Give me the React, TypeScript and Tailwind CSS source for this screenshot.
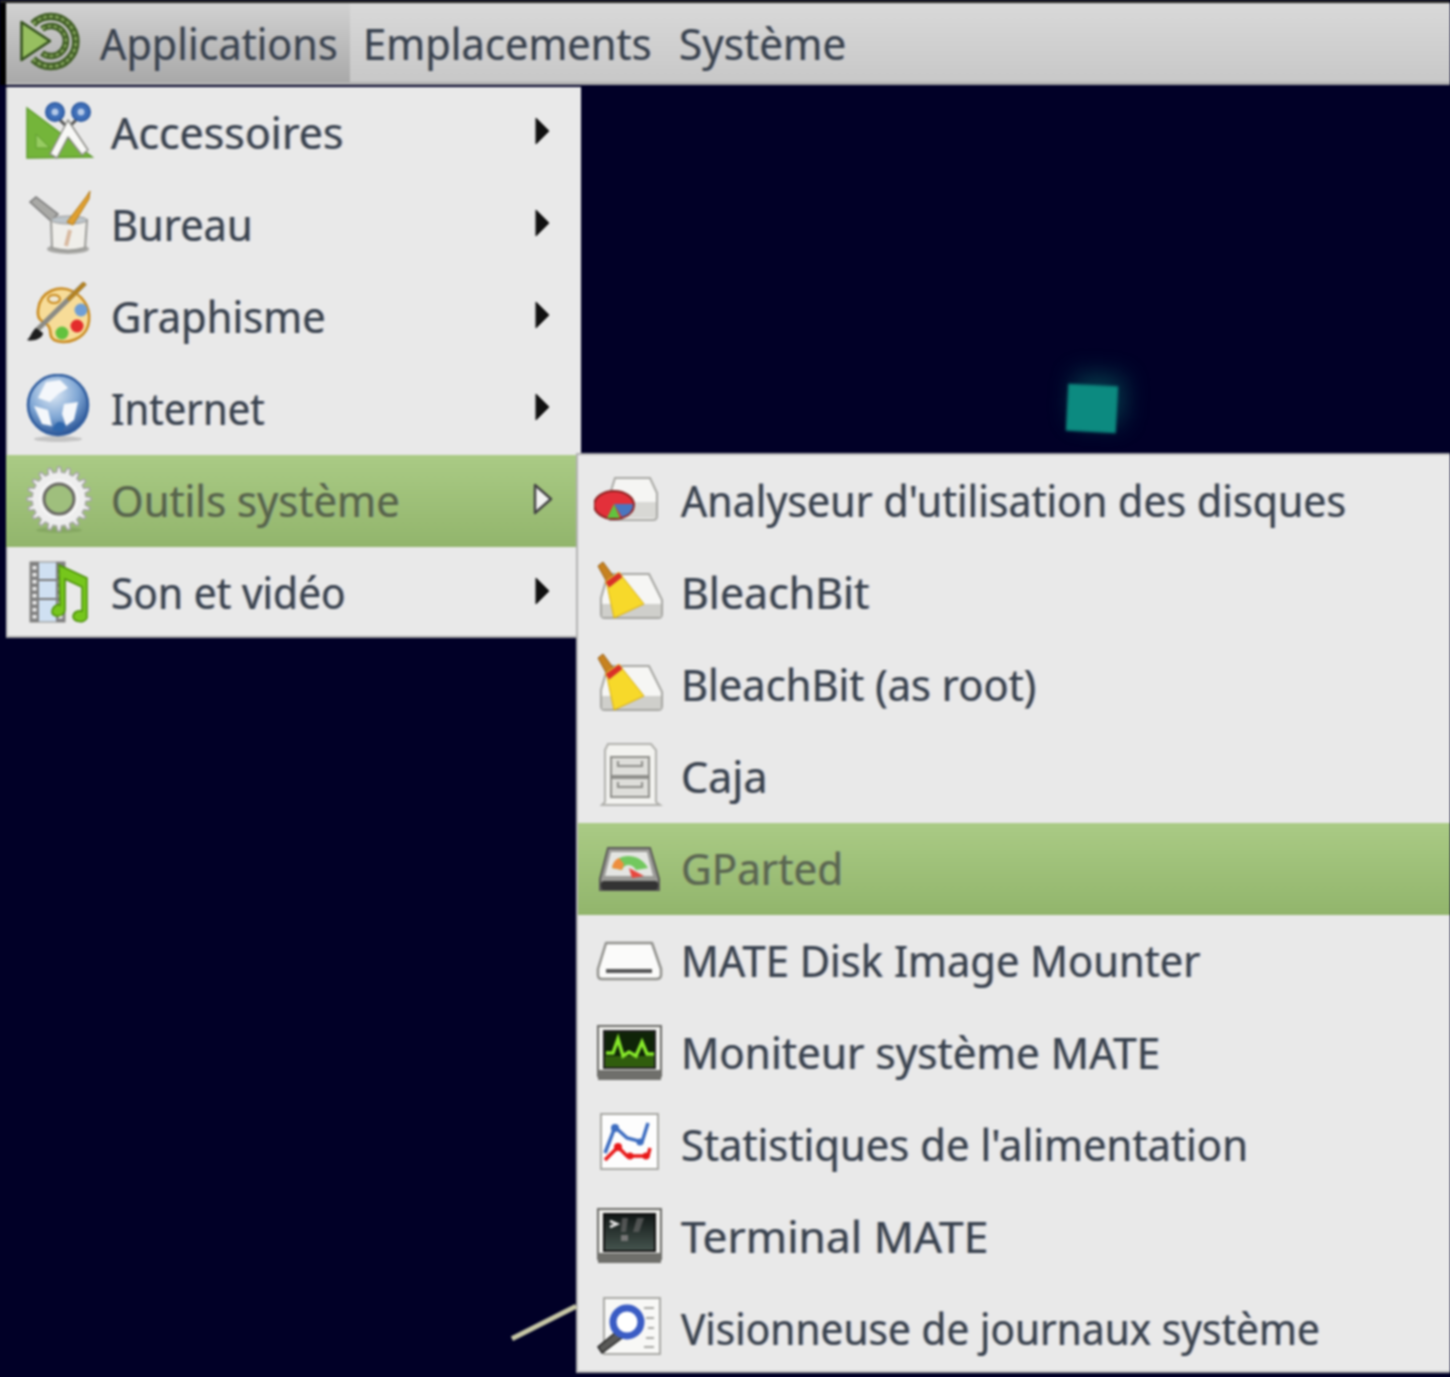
import React from 'react';

const gearPoints = (() => {
  const pts: string[] = [];
  const n = 20;
  for (let i = 0; i < n; i++) {
    const step = (Math.PI * 2) / n;
    const a = i * step;
    [[a - step * 0.3, 27], [a - step * 0.14, 32], [a + step * 0.14, 32], [a + step * 0.3, 27]].forEach(([t, r]) => {
      pts.push(`${(35 + Math.cos(t) * r).toFixed(1)},${(33 + Math.sin(t) * r).toFixed(1)}`);
    });
  }
  return pts.join(' ');
})();

const Icon: React.FC<{ children: React.ReactNode }> = ({ children }) => (
  <svg viewBox="0 0 70 70" className="w-[70px] h-[70px] shrink-0">{children}</svg>
);

const MateLogo = () => (
  <svg viewBox="0 0 62 62" className="w-[62px] h-[62px] shrink-0">
    <path d="M13 12A25 25 0 1 1 13 47" fill="none" stroke="#3d5a22" strokeWidth="7.5" />
    <path d="M13 12A25 25 0 1 1 13 47" fill="none" stroke="#7f9f58" strokeWidth="3" strokeDasharray="4 2" />
    <path d="M22 17A15 15 0 1 1 22 41" fill="none" stroke="#3d5a22" strokeWidth="6.5" />
    <path d="M22 17A15 15 0 1 1 22 41" fill="none" stroke="#7f9f58" strokeWidth="2.5" strokeDasharray="4 2" />
    <path d="M1.5 10L30 29L1.5 48Z" fill="#97bf60" stroke="#33501c" strokeWidth="2.5" strokeLinejoin="round" />
  </svg>
);

const Accessories = () => (
  <Icon>
    <path d="M3 10L68 59L3 60Z" fill="#74b53a" stroke="#5d9a2c" strokeWidth="1.5" />
    <path d="M12 36L26 50H12Z" fill="#97cc62" stroke="#5d9a2c" />
    <path d="M36 22L44 30L52 22" fill="none" stroke="#555" strokeWidth="3" />
    <path d="M44 22L64 52L58 57L44 39L33 60L26 56Z" fill="#f8f8f6" stroke="#8b8b86" strokeWidth="1.5" strokeLinejoin="round" />
    <circle cx="31" cy="14" r="9" fill="#3f6fb8" stroke="#2c5aa2" strokeWidth="2" />
    <circle cx="57" cy="14" r="9" fill="#3f6fb8" stroke="#2c5aa2" strokeWidth="2" />
    <circle cx="31" cy="14" r="3.5" fill="#b4c9e8" />
    <circle cx="57" cy="14" r="3.5" fill="#b4c9e8" />
  </Icon>
);

const Office = () => (
  <Icon>
    <ellipse cx="44" cy="59" rx="21" ry="5" fill="#a9a9a6" />
    <path d="M6 12L12 7L34 24L27 31Z" fill="#a9a9a6" stroke="#777" strokeWidth="1.5" />
    <path d="M27 30H63L61 58Q44 63 28 58Z" fill="#efeeea" stroke="#9a9a96" strokeWidth="2" />
    <ellipse cx="45" cy="30" rx="18" ry="4" fill="#bcc4c9" stroke="#999" />
    <path d="M43 32L62 7L66 1L65 9L49 35Z" fill="#e0a030" stroke="#b07818" />
    <path d="M46 40L42 56" stroke="#d8b9a0" strokeWidth="4" />
  </Icon>
);

const Graphics = () => (
  <Icon>
    <path d="M14 28C16 8 36 3 48 9C62 16 68 30 64 44C60 57 44 62 33 59C22 56 30 46 22 42C18 39 13 38 14 28Z" fill="#f7dc98" stroke="#c98a1e" strokeWidth="2.5" />
    <ellipse cx="30" cy="17" rx="6" ry="4" fill="#eee7d2" stroke="#c98a1e" strokeWidth="2" />
    <circle cx="57" cy="28" r="6.5" fill="#6f9fd6" />
    <circle cx="53" cy="44" r="6.5" fill="#e32c2c" />
    <circle cx="38" cy="51" r="6.5" fill="#62c23e" />
    <path d="M61 1L12 49" stroke="#8b8b85" strokeWidth="5" />
    <path d="M61 1L44 18" stroke="#b48220" strokeWidth="4" />
    <path d="M12 46C7 50 7 55 3 58C10 60 19 56 19 51Z" fill="#1e1e1e" />
  </Icon>
);

const Internet = () => (
  <Icon>
    <defs>
      <radialGradient id="globe" cx="42%" cy="30%" r="75%">
        <stop offset="0" stopColor="#e2ecf6" />
        <stop offset="0.55" stopColor="#7fa6d4" />
        <stop offset="1" stopColor="#1f4a8e" />
      </radialGradient>
    </defs>
    <ellipse cx="34" cy="65" rx="24" ry="3" fill="#c4c4c4" />
    <circle cx="34" cy="31" r="30" fill="url(#globe)" stroke="#2f5c9e" strokeWidth="2.5" />
    <path d="M22 8L36 6L44 14L34 20L26 28L14 24ZM10 32L24 36L28 52L18 50ZM40 30L54 28L50 46L42 52L38 40Z" fill="#f4f7fb" />
    <path d="M28 56Q34 42 42 52L38 58Z" fill="#2f67ac" />
  </Icon>
);

const System = () => (
  <Icon>
    <ellipse cx="35" cy="64" rx="23" ry="3" fill="#86a862" />
    <polygon points={gearPoints} fill="#eeeeee" stroke="#a5a5a5" strokeWidth="1.5" />
    <circle cx="35" cy="33" r="20" fill="#f4f4f4" />
    <circle cx="35" cy="33" r="15" fill="#9fbf7d" stroke="#6a6a64" strokeWidth="3" />
  </Icon>
);

const Multimedia = () => (
  <Icon>
    <rect x="6" y="4" width="35" height="60" fill="#cfe0f2" stroke="#8a8a86" />
    <rect x="6" y="4" width="9" height="60" fill="#808080" />
    <rect x="32" y="4" width="9" height="60" fill="#808080" />
    {[8, 15, 22, 29, 36, 43, 50, 57].map((y) => (
      <g key={y}>
        <rect x="8.5" y={y} width="4" height="3.5" fill="#ededed" />
        <rect x="34.5" y={y} width="4" height="3.5" fill="#ededed" />
      </g>
    ))}
    <path d="M15 22H32M15 41H32" stroke="#777" strokeWidth="2" />
    <path d="M35 7L63 20V60C60 66 50 64 49 59C49 54 54 52 58 53V29L41 21V52C40 60 27 60 28 53C29 47 35 46 36 47Z" fill="#76c61c" stroke="#4a8e08" strokeWidth="1.5" />
  </Icon>
);

const Baobab = () => (
  <Icon>
    <path d="M21 12H56L63 27V50Q63 54 59 54H16V28Z" fill="#f5f5f3" stroke="#a8a8a4" strokeWidth="2" />
    <rect x="28" y="36" width="34" height="16" fill="#d8d8d4" />
    <ellipse cx="20" cy="39" rx="20" ry="14" fill="#e3303a" stroke="#8c2020" strokeWidth="2" />
    <path d="M20 38H39Q39 48 28 51Z" fill="#4a76c0" />
    <path d="M20 38L26 52H13Z" fill="#62c23e" />
  </Icon>
);

const Bleach = () => (
  <Icon>
    <path d="M14 16H55L68 42V56Q68 60 64 60H11Q7 60 7 56V40Z" fill="#f6f6f4" stroke="#a5a5a1" strokeWidth="2" />
    <rect x="8" y="46" width="59" height="13" fill="#cfcfcb" />
    <path d="M4 8L9 4L23 23L15 28Z" fill="#c7821f" stroke="#96601a" />
    <path d="M13 27L27 17L50 46L20 60Z" fill="#f7d92a" stroke="#d8ad14" />
    <path d="M11 24L25 14L29 19L15 30Z" fill="#d93028" stroke="#e9cc36" />
  </Icon>
);

const Caja = () => (
  <Icon>
    <path d="M14 2H57L62 8V60L66 63H8L11 60V8Z" fill="#f2f2ef" stroke="#b0b0ac" strokeWidth="2" />
    <rect x="17" y="15" width="38" height="19" fill="#dededa" stroke="#8e8e8a" strokeWidth="2" />
    <rect x="17" y="36" width="38" height="19" fill="#dededa" stroke="#8e8e8a" strokeWidth="2" />
    <path d="M24 19V24H48V19M24 40V45H48V40" fill="none" stroke="#8e8e8a" strokeWidth="2" />
  </Icon>
);

const GParted = () => (
  <Icon>
    <path d="M14 14H56L65 45V56H6V45Z" fill="#9a9a96" stroke="#5a5a57" strokeWidth="2" />
    <path d="M17 18H53L59 42H11Z" fill="#e4e5e2" />
    <path d="M18 34C20 20 44 16 54 34L42 36C38 29 30 30 28 36Z" fill="#72c85e" />
    <path d="M18 34C19 28 22 25 25 24L30 30L28 36Z" fill="#ee8e3e" />
    <path d="M35 34L50 42L38 44Z" fill="#e8473e" />
    <rect x="7" y="47" width="57" height="9" rx="3" fill="#333" />
  </Icon>
);

const Disk = () => (
  <Icon>
    <path d="M12 17H58L67 43V49Q67 53 62 53H8Q4 53 4 49V43Z" fill="#fbfbfa" stroke="#90908c" strokeWidth="2.5" strokeLinejoin="round" />
    <rect x="12" y="43" width="46" height="4" fill="#555" />
  </Icon>
);

const Monitor = () => (
  <Icon>
    <rect x="4" y="8" width="63" height="50" fill="#efefec" stroke="#6a6a66" strokeWidth="2" />
    <rect x="4" y="52" width="63" height="10" fill="#6f6f6b" />
    <rect x="10" y="13" width="51" height="37" fill="#0f2408" stroke="#222" strokeWidth="2" />
    <path d="M11 38H60V49H11Z" fill="#3c7010" opacity="0.75" />
    <path d="M12 35H19L24 21L29 38L35 34L42 38L48 24L53 36H60" fill="none" stroke="#86e82a" strokeWidth="3.5" />
  </Icon>
);

const Stats = () => (
  <Icon>
    <rect x="7" y="4" width="57" height="55" fill="#fdfdfd" stroke="#a8a8a4" strokeWidth="2" />
    <path d="M11 43L21 17L33 28L48 32L54 13" fill="none" stroke="#3c6cc0" strokeWidth="3.5" />
    <circle cx="21" cy="18" r="4" fill="#3c6cc0" />
    <circle cx="46" cy="32" r="3.5" fill="#3c6cc0" />
    <path d="M11 50L24 37L33 46H54L56 38" fill="none" stroke="#e81818" strokeWidth="3.5" />
    <circle cx="24" cy="37" r="4" fill="#e81818" />
    <circle cx="36" cy="46" r="3.5" fill="#e81818" />
    <circle cx="52" cy="46" r="3.5" fill="#e81818" />
  </Icon>
);

const Terminal = () => (
  <Icon>
    <defs>
      <linearGradient id="term" x1="0" y1="0" x2="0" y2="1">
        <stop offset="0" stopColor="#111716" />
        <stop offset="1" stopColor="#46554f" />
      </linearGradient>
    </defs>
    <rect x="4" y="7" width="63" height="50" fill="#efefec" stroke="#6a6a66" strokeWidth="2" />
    <rect x="4" y="51" width="63" height="10" fill="#6f6f6b" />
    <rect x="10" y="12" width="51" height="37" fill="url(#term)" stroke="#111" strokeWidth="2" />
    <path d="M16 19L23 22L16 25" fill="none" stroke="#e4e4e4" strokeWidth="2.5" />
    <path d="M28 16H34L32 30H27ZM43 16H50L45 30H39Z" fill="#666" opacity="0.7" />
    <rect x="27" y="33" width="7" height="6" fill="#777" />
  </Icon>
);

const LogViewer = () => (
  <Icon>
    <rect x="10" y="4" width="56" height="56" fill="#f8f8f6" stroke="#a8a8a4" strokeWidth="2" />
    <path d="M50 14H60M52 24H60M54 34H60M52 44H60M50 53H60" stroke="#a8a8a4" strokeWidth="2" />
    <path d="M22 38L4 53L8 59L28 44Z" fill="#5a5a58" stroke="#222" strokeWidth="1.5" />
    <circle cx="33" cy="28" r="14" fill="#ffffff" stroke="#3a5cc4" strokeWidth="7" />
  </Icon>
);

const Arrow = ({ active }: { active?: boolean }) =>
  active ? (
    <svg viewBox="0 0 20 32" className="w-[20px] h-[32px] -translate-y-[2px]">
      <path d="M2 2L18 16L2 30Z" fill="#f2f2f2" stroke="#444" strokeWidth="2.5" strokeLinejoin="round" />
    </svg>
  ) : (
    <svg viewBox="0 0 20 32" className="w-[20px] h-[32px] -translate-x-[2px] -translate-y-[2px]">
      <path d="M5 3L18 16L5 29Z" fill="#111" stroke="#111" strokeLinejoin="round" />
    </svg>
  );

// the original is a hinted small font blown up, its glyphs come out narrower per label
const mainItems = [
  { label: 'Accessoires', fit: 'scale-x-[0.975]', icon: <Accessories /> },
  { label: 'Bureau', fit: 'scale-x-[0.946]', icon: <Office /> },
  { label: 'Graphisme', fit: 'scale-x-[0.947]', icon: <Graphics /> },
  { label: 'Internet', fit: 'scale-x-[0.91]', icon: <Internet /> },
  { label: 'Outils système', fit: 'scale-x-[0.95]', icon: <System />, active: true },
  { label: 'Son et vidéo', fit: 'scale-x-[0.925]', icon: <Multimedia /> },
];

const subItems = [
  { label: "Analyseur d'utilisation des disques", fit: 'scale-x-[0.935]', icon: <Baobab /> },
  { label: 'BleachBit', fit: 'scale-x-[0.974]', icon: <Bleach /> },
  { label: 'BleachBit (as root)', fit: 'scale-x-[0.947]', icon: <Bleach /> },
  { label: 'Caja', fit: 'scale-x-[0.977]', icon: <Caja /> },
  { label: 'GParted', fit: 'scale-x-[0.958]', icon: <GParted />, active: true },
  { label: 'MATE Disk Image Mounter', fit: 'scale-x-[0.947]', icon: <Disk /> },
  { label: 'Moniteur système MATE', fit: 'scale-x-[0.96]', icon: <Monitor /> },
  { label: "Statistiques de l'alimentation", fit: 'scale-x-[0.95]', icon: <Stats /> },
  { label: 'Terminal MATE', fit: 'scale-x-[1.006]', icon: <Terminal /> },
  { label: 'Visionneuse de journaux système', fit: 'scale-x-[0.923]', icon: <LogViewer /> },
];

const App: React.FC = () => {
  return (
    <div className="w-[1450px] h-[1377px] overflow-hidden bg-[#010027]">
      <div className="relative w-[1450px] h-[1377px] font-['Noto_Sans',sans-serif] text-[#39424f] text-[44px] leading-none blur-[1px] [text-shadow:-1.3px_0_0_rgba(190,120,50,0.32),1.3px_0_0_rgba(60,120,210,0.32)]">
        <div className="h-[3px] bg-[#222222]" />

        <div className="flex h-[82px] pl-[6px] bg-black">
          <div className="flex flex-1 items-center bg-gradient-to-b from-[#d9d9d9] to-[#c8c8c8] border-b-[3px] border-[#b0b0b0]">
            <div className="flex items-center h-full w-[344px] pl-[14px] gap-[18px] bg-gradient-to-b from-[#d2d2d2] to-[#a9a9a9]">
              <MateLogo />
              <span className="whitespace-nowrap origin-left scale-x-[0.94]">Applications</span>
            </div>
            <span className="ml-[13px] origin-left scale-x-[0.947]">Emplacements</span>
            <span className="ml-[11px] origin-left scale-x-[0.96]">Système</span>
          </div>
        </div>

        <div className="ml-[6px] mt-[2px] w-[575px] h-[551px] overflow-hidden bg-[#e9e9e9] border-b-[2px] border-b-[#a8a8a8]">
          {mainItems.map((item) => (
            <div
              key={item.label}
              className={
                item.active
                  ? 'flex items-center h-[92px] pl-[18px] pr-[28px] gap-[17px] bg-gradient-to-b from-[#aacb85] to-[#92b56c] text-[#56634a]'
                  : 'flex items-center h-[92px] pl-[16px] pr-[28px] gap-[17px] border-l-[2px] border-[#c4c4c4]'
              }
            >
              {item.icon}
              <span className={`flex-1 origin-left -translate-y-[1px] ${item.fit}`}>{item.label}</span>
              <Arrow active={item.active} />
            </div>
          ))}
        </div>

        <div className="absolute left-[576px] top-[453px] w-[874px] h-[920px] overflow-hidden bg-[#e9e9e9] border-l-[2px] border-t-[2px] border-b-[2px] border-[#b2b2b2]">
          {subItems.map((item) => (
            <div
              key={item.label}
              className={
                item.active
                  ? 'flex items-center h-[92px] pl-[16px] gap-[17px] bg-gradient-to-b from-[#aacb85] to-[#92b56c] text-[#5a6650]'
                  : 'flex items-center h-[92px] pl-[16px] gap-[17px]'
              }
            >
              {item.icon}
              <span className={`origin-left -translate-y-[1px] ${item.fit}`}>{item.label}</span>
            </div>
          ))}
        </div>

        <div className="absolute left-[1067px] top-[385px] w-[50px] h-[47px] rotate-[3deg] blur-[1px] bg-[#0c8a80] shadow-[6px_-10px_24px_rgba(11,132,120,0.45)]" />
        <div className="absolute left-[508px] top-[1320px] w-[72px] h-[5px] -rotate-[27deg] bg-[#c6c6a6]" />
      </div>
    </div>
  );
};

export default App;
